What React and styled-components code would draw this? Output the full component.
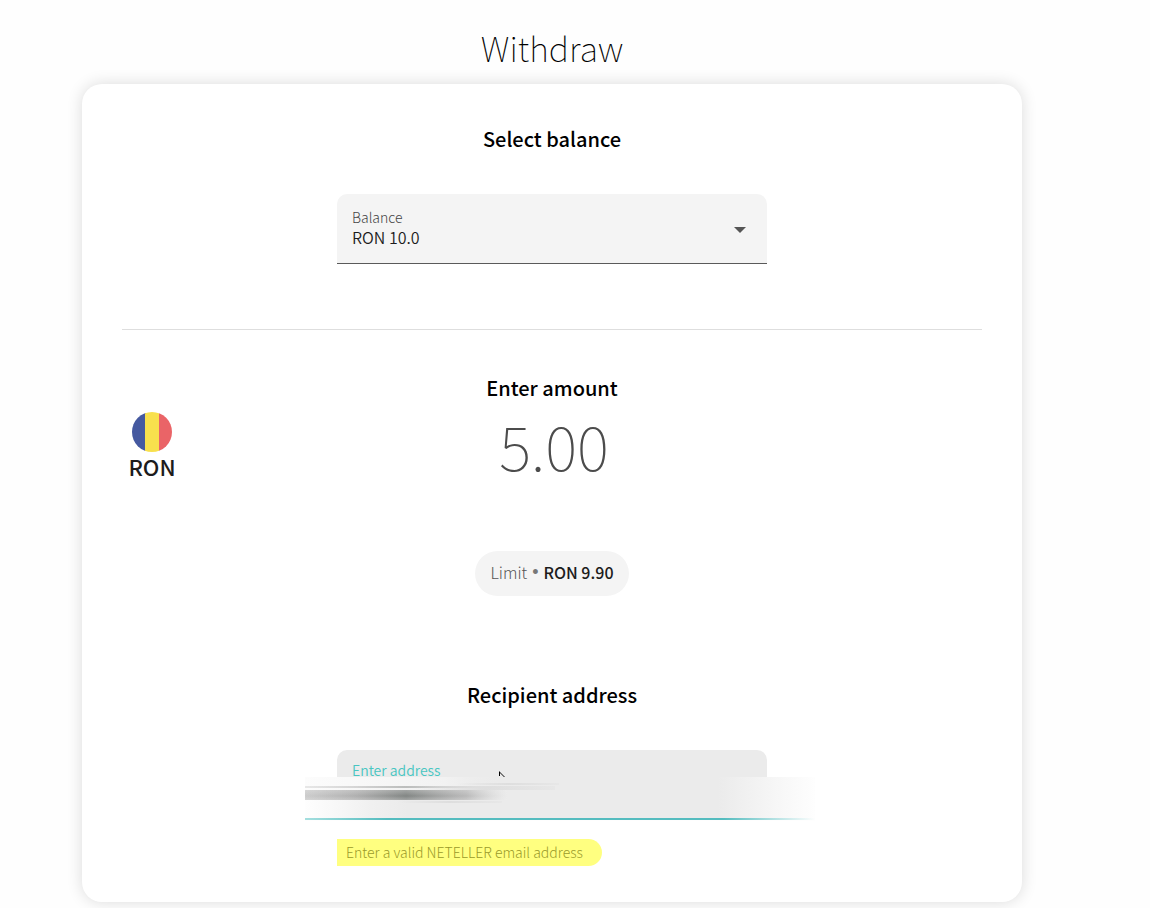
import React from "react";
import styled, { createGlobalStyle } from "styled-components";

const GlobalStyle = createGlobalStyle`
  *, *::before, *::after { box-sizing: border-box; }
  body {
    margin: 0;
    background: #fefefe;
    color: #000;
    font-family: "Noto Sans CJK SC", "Noto Sans", sans-serif;
  }
  input, select, button { font-family: inherit; }
`;

const Page = styled.main`
  padding: 24px 128px 6px 82px;
`;

const Title = styled.h1`
  margin: 0 0 12px;
  font-size: 34px;
  line-height: 48px;
  font-weight: 100;
  text-align: center;
`;

const Card = styled.form`
  padding: 39px 40px 36px;
  background: #fff;
  border-radius: 20px;
  box-shadow: 0 0 16px rgba(0, 0, 0, 0.14);
`;

const Section = styled.section`
  display: flex;
  flex-direction: column;
  align-items: center;
`;

const Heading = styled.h2`
  margin: 0;
  font-size: 20px;
  line-height: 32px;
  font-weight: 500;
  text-align: center;
`;

const Field = styled.div`
  position: relative;
  display: flex;
  flex-direction: column;
  width: 50%;
  height: 70px;
  margin-top: 39px;
  padding: ${(p) => (p.$active ? 10 : 13)}px 15px 0;
  border-radius: 10px 10px 0 0;
  background: ${(p) => (p.$active ? "#ebebeb" : "#f4f4f4")};
  border-bottom: ${(p) => (p.$active ? "2px solid #54bcbf" : "1px solid #5a5a5a")};
`;

const Label = styled.label`
  font-size: 14px;
  line-height: 20px;
  font-weight: ${(p) => (p.$active ? 350 : 300)};
  color: ${(p) => (p.$active ? "#48c6c2" : "#444")};
`;

const Select = styled.select`
  appearance: none;
  width: 100%;
  height: 20px;
  padding: 0;
  border: 0;
  outline: 0;
  background: transparent;
  color: #1c1c1c;
  font-size: 16px;
  line-height: 20px;
  font-weight: 350;
`;

const Caret = styled.svg`
  position: absolute;
  top: 33px;
  right: 21px;
  pointer-events: none;
`;

const AddressInput = styled.input`
  width: 100%;
  height: 20px;
  padding: 0;
  border: 0;
  outline: 0;
  background: transparent;
  font-size: 16px;
`;

const Divider = styled.hr`
  width: 100%;
  height: 1px;
  margin: 65px 0 42px;
  border: 0;
  background: #dedede;
`;

const AmountRow = styled.section`
  display: grid;
  grid-template-columns: 60px 1fr 60px;
`;

const Currency = styled.div`
  display: flex;
  flex-direction: column;
  align-items: center;
  padding-top: 40px;
  color: #1c1c1c;
  font-size: 22px;
  line-height: 28px;
  font-weight: 500;
`;

const AmountInput = styled.input`
  width: 100%;
  height: 82px;
  padding: 0 0 0 4px;
  border: 0;
  outline: 0;
  background: transparent;
  color: #4c4c4c;
  font-size: 61px;
  line-height: 82px;
  font-weight: 100;
  text-align: center;
`;

const Limit = styled.p`
  display: flex;
  gap: 5px;
  height: 45px;
  margin: 65px 0 83px;
  padding: 0 15px;
  border-radius: 23px;
  background: #f4f4f4;
  color: #555;
  font-size: 16px;
  line-height: 43px;
  font-weight: 300;
`;

const Bullet = styled.span`
  font-family: "Liberation Sans", sans-serif;
  font-size: 18px;
  color: #777;
`;

const LimitValue = styled.strong`
  color: #1c1c1c;
  font-weight: 500;
`;

const Smudge = styled.svg`
  position: absolute;
  top: 27px;
  left: -32px;
  width: calc(100% + 80px);
  height: 44px;
  pointer-events: none;
`;

const Pointer = styled.svg`
  position: absolute;
  top: 21px;
  left: 162px;
  pointer-events: none;
`;

const HintRow = styled.div`
  display: flex;
  width: 50%;
  margin-top: 19px;
`;

const Hint = styled.p`
  margin: 0;
  padding: 0 19px 0 9px;
  border-radius: 0 14px 14px 0;
  background: #ffff80;
  color: #9a9a2a;
  font-size: 14px;
  line-height: 27px;
  font-weight: 300;
`;

function Flag() {
  return (
    <svg width="40" height="40" viewBox="0 0 40 40" role="img" aria-label="Romania">
      <clipPath id="flag-clip">
        <circle cx="20" cy="20" r="20" />
      </clipPath>
      <g clipPath="url(#flag-clip)">
        <rect width="14" height="40" fill="#4559a0" />
        <rect x="13" width="14" height="40" fill="#f8e04d" />
        <rect x="27" width="13" height="40" fill="#ea6467" />
      </g>
    </svg>
  );
}

function SmearedValue() {
  return (
    <Smudge viewBox="0 0 510 44" preserveAspectRatio="none" aria-hidden="true">
      <defs>
        <linearGradient id="base">
          <stop offset="0" stopColor="#fefefe" />
          <stop offset="0.06" stopColor="#f8f8f8" />
          <stop offset="0.13" stopColor="#f0f0f0" />
          <stop offset="0.2" stopColor="#ebebeb" />
          <stop offset="0.81" stopColor="#ebebeb" />
          <stop offset="0.9" stopColor="#f4f4f4" />
          <stop offset="1" stopColor="#fefefe" />
        </linearGradient>
        <linearGradient id="ink">
          <stop offset="0" stopColor="#aaa" stopOpacity="0.6" />
          <stop offset="0.25" stopColor="#999" stopOpacity="0.75" />
          <stop offset="0.5" stopColor="#7c807e" stopOpacity="0.95" />
          <stop offset="0.8" stopColor="#999" stopOpacity="0.6" />
          <stop offset="1" stopColor="#bbb" stopOpacity="0" />
        </linearGradient>
        <linearGradient id="inkFade" x1="0" y1="0" x2="0" y2="1">
          <stop offset="0" stopColor="#eee" stopOpacity="0.3" />
          <stop offset="0.6" stopColor="#eee" stopOpacity="0" />
          <stop offset="1" stopColor="#eee" stopOpacity="0.3" />
        </linearGradient>
        <linearGradient id="trail">
          <stop offset="0" stopColor="#dedede" stopOpacity="0" />
          <stop offset="0.5" stopColor="#dedede" />
          <stop offset="1" stopColor="#dedede" stopOpacity="0.3" />
        </linearGradient>
        <linearGradient id="light">
          <stop offset="0" stopColor="#fcfcfc" />
          <stop offset="0.7" stopColor="#f2f2f2" />
          <stop offset="1" stopColor="#ebebeb" stopOpacity="0" />
        </linearGradient>
        <linearGradient id="teal">
          <stop offset="0" stopColor="#a5dfdf" />
          <stop offset="0.16" stopColor="#54bcbf" />
          <stop offset="0.82" stopColor="#54bcbf" />
          <stop offset="1" stopColor="#fefefe" />
        </linearGradient>
      </defs>
      <rect width="510" height="44" fill="url(#base)" />
      <rect width="200" height="9" fill="url(#light)" />
      <rect y="9" width="200" height="2" fill="url(#ink)" opacity="0.45" />
      <rect y="11" width="190" height="2" fill="url(#light)" opacity="0.8" />
      <rect x="152" y="6" width="102" height="2" fill="url(#trail)" />
      <rect x="110" y="9" width="140" height="4" fill="url(#trail)" />
      <rect y="13" width="202" height="10" fill="url(#ink)" />
      <rect y="13" width="202" height="10" fill="url(#inkFade)" />
      <rect x="92" y="24" width="105" height="2" fill="url(#trail)" />
      <rect y="41" width="510" height="2" fill="url(#teal)" />
      <rect y="43" width="510" height="1" fill="#fefefe" />
    </Smudge>
  );
}

export default function App() {
  return (
    <>
      <GlobalStyle />
      <Page>
        <Title>Withdraw</Title>
        <Card>
          <Section>
            <Heading>Select balance</Heading>
            <Field>
              <Label htmlFor="balance">Balance</Label>
              <Select id="balance" defaultValue="ron">
                <option value="ron">RON 10.0</option>
              </Select>
              <Caret width="12" height="6" viewBox="0 0 12 6" aria-hidden="true">
                <path d="M0 0h12L6 6z" fill="#555" />
              </Caret>
            </Field>
          </Section>
          <Divider />
          <AmountRow>
            <Currency>
              <Flag />
              RON
            </Currency>
            <Section>
              <Heading as="label" htmlFor="amount">Enter amount</Heading>
              <AmountInput id="amount" type="text" inputMode="decimal" defaultValue="5.00" />
              <Limit>
                Limit <Bullet>•</Bullet> <LimitValue>RON 9.90</LimitValue>
              </Limit>
            </Section>
          </AmountRow>
          <Section>
            <Heading>Recipient address</Heading>
            <Field $active>
              <Label htmlFor="address" $active>Enter address</Label>
              <AddressInput id="address" type="email" aria-describedby="address-hint" />
              <SmearedValue />
              <Pointer width="6" height="6" viewBox="0 0 6 6" aria-hidden="true">
                <path d="M0 0v5h1V2l4 4h1z" fill="#000" />
              </Pointer>
            </Field>
            <HintRow>
              <Hint id="address-hint">Enter a valid NETELLER email address</Hint>
            </HintRow>
          </Section>
        </Card>
      </Page>
    </>
  );
}
